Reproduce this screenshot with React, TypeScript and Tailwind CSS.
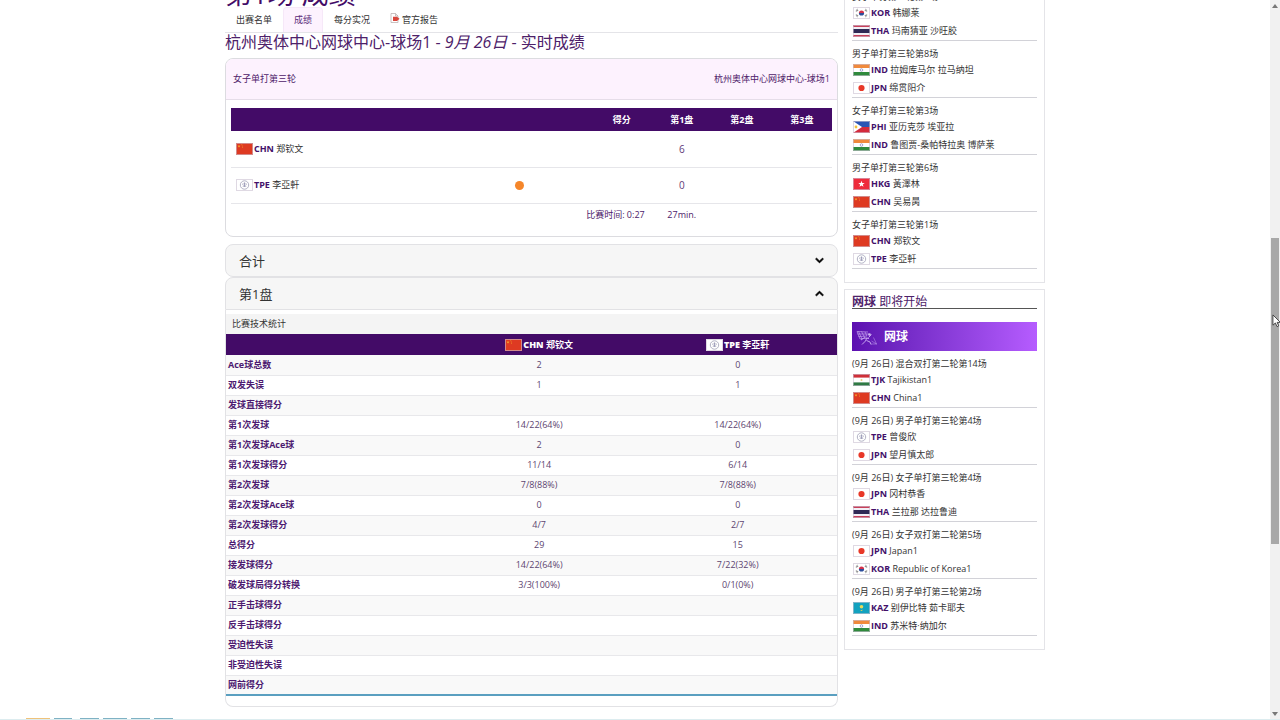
import { useState } from "react";
import type { ReactNode } from "react";
import { FaChevronDown, FaChevronUp } from "react-icons/fa";

interface Player {
  code: string;
  name: string;
}

interface Match {
  title: string;
  players: Player[];
}

const zheng: Player = { code: "CHN", name: "郑钦文" };
const li: Player = { code: "TPE", name: "李亞軒" };

const liveMatches: Match[] = [
  {
    title: "女子单打第三轮第7场",
    players: [
      { code: "KOR", name: "韩娜莱" },
      { code: "THA", name: "玛南猜亚 沙旺胶" },
    ],
  },
  {
    title: "男子单打第三轮第8场",
    players: [
      { code: "IND", name: "拉姆库马尔 拉马纳坦" },
      { code: "JPN", name: "绵贯阳介" },
    ],
  },
  {
    title: "女子单打第三轮第3场",
    players: [
      { code: "PHI", name: "亚历克莎 埃亚拉" },
      { code: "IND", name: "鲁图贾-桑帕特拉奥 博萨莱" },
    ],
  },
  {
    title: "男子单打第三轮第6场",
    players: [
      { code: "HKG", name: "黃澤林" },
      { code: "CHN", name: "吴易昺" },
    ],
  },
  { title: "女子单打第三轮第1场", players: [zheng, li] },
];

const upcomingMatches: Match[] = [
  {
    title: "(9月 26日) 混合双打第二轮第14场",
    players: [
      { code: "TJK", name: "Tajikistan1" },
      { code: "CHN", name: "China1" },
    ],
  },
  {
    title: "(9月 26日) 男子单打第三轮第4场",
    players: [
      { code: "TPE", name: "曾俊欣" },
      { code: "JPN", name: "望月慎太郎" },
    ],
  },
  {
    title: "(9月 26日) 女子单打第三轮第4场",
    players: [
      { code: "JPN", name: "冈村恭香" },
      { code: "THA", name: "兰拉那 达拉鲁迪" },
    ],
  },
  {
    title: "(9月 26日) 女子双打第二轮第5场",
    players: [
      { code: "JPN", name: "Japan1" },
      { code: "KOR", name: "Republic of Korea1" },
    ],
  },
  {
    title: "(9月 26日) 男子单打第三轮第2场",
    players: [
      { code: "KAZ", name: "别伊比特 茹卡耶夫" },
      { code: "IND", name: "苏米特·纳加尔" },
    ],
  },
];

const stats: [string, string, string][] = [
  ["Ace球总数", "2", "0"],
  ["双发失误", "1", "1"],
  ["发球直接得分", "", ""],
  ["第1次发球", "14/22(64%)", "14/22(64%)"],
  ["第1次发球Ace球", "2", "0"],
  ["第1次发球得分", "11/14", "6/14"],
  ["第2次发球", "7/8(88%)", "7/8(88%)"],
  ["第2次发球Ace球", "0", "0"],
  ["第2次发球得分", "4/7", "2/7"],
  ["总得分", "29", "15"],
  ["接发球得分", "14/22(64%)", "7/22(32%)"],
  ["破发球局得分转换", "3/3(100%)", "0/1(0%)"],
  ["正手击球得分", "", ""],
  ["反手击球得分", "", ""],
  ["受迫性失误", "", ""],
  ["非受迫性失误", "", ""],
  ["网前得分", "", ""],
];

const STAR = "M0 -1 L.24 -.31 L.95 -.31 L.38 .12 L.59 .81 L0 .4 L-.59 .81 L-.38 .12 L-.95 -.31 L-.24 -.31Z";

const flagArt: Record<string, ReactNode> = {
  CHN: (
    <>
      <rect width="17" height="12" fill="#de3a22" />
      <path d={STAR} transform="translate(3 3.2) scale(1.5)" fill="#f7b52c" />
      <circle cx="5.8" cy="1.7" r=".45" fill="#f7b52c" />
      <circle cx="6.6" cy="3" r=".45" fill="#f7b52c" />
      <circle cx="6.4" cy="4.6" r=".45" fill="#f7b52c" />
    </>
  ),
  TPE: (
    <>
      <rect width="17" height="12" fill="#fff" />
      <circle cx="8.5" cy="6" r="4.2" fill="none" stroke="#a9a9bd" strokeWidth=".9" />
      <path d={STAR} transform="translate(8.5 5.8) scale(2.6)" fill="none" stroke="#a9a9bd" strokeWidth=".2" />
      <path d="M8.5 4v4" stroke="#8f8fb0" strokeWidth=".8" />
    </>
  ),
  KOR: (
    <>
      <rect width="17" height="12" fill="#fff" />
      <path d="M5.9 6a2.6 2.6 0 0 1 5.2 0Z" fill="#d4304a" />
      <path d="M5.9 6a2.6 2.6 0 0 0 5.2 0Z" fill="#2b4d9b" />
      <path
        d="M2.8 3.8 4.6 2.2M3.6 4.6 5.2 3M14.2 3.8 12.4 2.2M13.4 4.6 11.8 3M2.8 8.2 4.6 9.8M3.6 7.4 5.2 9M14.2 8.2 12.4 9.8M13.4 7.4 11.8 9"
        stroke="#444"
        strokeWidth=".7"
      />
    </>
  ),
  THA: (
    <>
      <rect width="17" height="12" fill="#c8415a" />
      <rect y="2" width="17" height="8" fill="#f1eef5" />
      <rect y="4" width="17" height="4" fill="#2f2a55" />
    </>
  ),
  IND: (
    <>
      <rect width="17" height="12" fill="#fff" />
      <rect width="17" height="4" fill="#f08a3c" />
      <rect y="8" width="17" height="4" fill="#2f8a3c" />
      <circle cx="8.5" cy="6" r="1.3" fill="none" stroke="#6a6fb0" strokeWidth=".6" />
    </>
  ),
  JPN: (
    <>
      <rect width="17" height="12" fill="#fff" />
      <circle cx="8.5" cy="6" r="3.1" fill="#e83828" />
    </>
  ),
  PHI: (
    <>
      <rect width="17" height="6" fill="#2a55b5" />
      <rect y="6" width="17" height="6" fill="#d42a3c" />
      <path d="M0 0 9 6 0 12Z" fill="#fff" />
      <circle cx="3" cy="6" r="1.4" fill="#f2c23a" />
    </>
  ),
  HKG: (
    <>
      <rect width="17" height="12" fill="#ee2b3c" />
      <path d={STAR} transform="translate(8.5 6.1) scale(3.4)" fill="#fff" />
    </>
  ),
  TJK: (
    <>
      <rect width="17" height="12" fill="#fff" />
      <rect width="17" height="3.6" fill="#cf3038" />
      <rect y="8.4" width="17" height="3.6" fill="#2f7a44" />
      <circle cx="8.5" cy="6" r="1" fill="#eccf80" />
    </>
  ),
  KAZ: (
    <>
      <rect width="17" height="12" fill="#12a2bf" />
      <circle cx="8.5" cy="4.8" r="1.8" fill="#e8d95a" />
      <path d="M5 6.5Q8.500 9.500 12 6.500L8.500 8.900Z" fill="#e8d95a" />
    </>
  ),
};

function Flag({ code }: { code: string }) {
  return (
    <svg viewBox="0 0 17 12" role="img" aria-label={code} className="w-[17px] h-3 shrink-0">
      {flagArt[code]}
      <rect x=".5" y=".5" width="16" height="11" fill="none" stroke="#c9c0d0" strokeOpacity=".6" />
    </svg>
  );
}

function PlayerLabel({ player }: { player: Player }) {
  return (
    <span className="inline-flex items-center gap-px align-middle whitespace-nowrap">
      <Flag code={player.code} />
      <span>
        <b>{player.code}</b> <span className="player-name">{player.name}</span>
      </span>
    </span>
  );
}

function MatchList({ matches }: { matches: Match[] }) {
  return (
    <ul>
      {matches.map((match) => (
        <li key={match.title} className="pt-[5px] border-b border-[#d2d2d8]">
          <h3 className="leading-[15px] text-[#333]">{match.title}</h3>
          {match.players.map((p) => (
            <div key={p.code} className="flex items-center h-[18px] pl-px text-[#333] [&_b]:text-[#43106a]">
              <PlayerLabel player={p} />
            </div>
          ))}
        </li>
      ))}
    </ul>
  );
}

function Tabs() {
  const tab = "flex items-center h-[25px] px-[11px] text-[#333]";
  return (
    <nav className="flex border-b border-[#e4e4e8]">
      <a href="#entries" className={tab}>
        出赛名单
      </a>
      <a
        href="#results"
        aria-current="page"
        className="flex items-center h-[25px] px-[10px] rounded-t border border-b-0 border-[#f6e8f8] bg-[#fdf2fe] text-[#5b2a7a]"
      >
        成绩
      </a>
      <a href="#points" className={tab}>
        每分实况
      </a>
      <a href="#report" className="flex items-center h-[25px] px-[9px] gap-[2px] text-[#333]">
        <svg viewBox="0 0 10 10" className="w-[10px] h-[10px] -mt-1" aria-hidden="true">
          <path d="M1 .5h4.500L8 3v6.500H1Z" fill="#fff" stroke="#b5a9a9" strokeWidth=".7" />
          <path d="M5.500.5V3H8" fill="none" stroke="#b5a9a9" strokeWidth=".7" />
          <path d="M3 3.800h4L9.500 5.800 7 8H3Z" fill="#d9463c" />
        </svg>
        官方报告
      </a>
    </nav>
  );
}

function ScoreCard() {
  const rows = [
    { player: zheng, serving: false, set1: "6" },
    { player: li, serving: true, set1: "0" },
  ];
  return (
    <section className="mt-[7px] rounded-lg border border-[#dcdce0] overflow-hidden text-[#4d2169]">
      <header className="flex items-center justify-between h-[41px] px-[7px] bg-[#fdf2fe] border-b border-[#e6dde9]">
        <span>女子单打第三轮</span>
        <span>杭州奥体中心网球中心-球场1</span>
      </header>
      <div className="px-[5px] pt-2 pb-[10px]">
        <table className="w-full table-fixed text-center text-[#4d2169]">
          <colgroup>
            <col className="w-[36%]" />
            <col className="w-[24%]" />
            <col className="w-[10%]" />
            <col className="w-[10%]" />
            <col className="w-[10%]" />
            <col className="w-[10%]" />
          </colgroup>
          <thead>
            <tr className="h-[23px] bg-[#430b67] text-white">
              <th />
              <th />
              <th>得分</th>
              <th>第1盘</th>
              <th>第2盘</th>
              <th>第3盘</th>
            </tr>
          </thead>
          <tbody>
            {rows.map((row) => (
              <tr key={row.player.code} className="h-9 border-b border-[#e6e6ea]">
                <td className="pl-[5px] text-left [&_b]:text-[#43106a] [&_.player-name]:text-[#333]">
                  <PlayerLabel player={row.player} />
                </td>
                <td>
                  {row.serving && <span className="block mx-auto w-[9px] h-[9px] rounded-full bg-[#f5862a]" />}
                </td>
                <td />
                <td className="text-[10px] text-[#5f3a78]">{row.set1}</td>
                <td />
                <td />
              </tr>
            ))}
            <tr className="h-[23px]">
              <td />
              <td colSpan={2} className="pr-[7px] text-right">
                比赛时间: 0:27
              </td>
              <td>27min.</td>
              <td />
              <td />
            </tr>
          </tbody>
        </table>
      </div>
    </section>
  );
}

function AccordionHeader({ title, open, onClick }: { title: string; open: boolean; onClick: () => void }) {
  const Chevron = open ? FaChevronUp : FaChevronDown;
  return (
    <button
      type="button"
      aria-expanded={open}
      onClick={onClick}
      className={`flex items-center justify-between w-full h-[33px] px-[13px] border border-[#e2e2e5] bg-[#f6f6f6] text-[13px] text-[#333] ${
        open ? "rounded-t-lg" : "rounded-lg"
      }`}
    >
      {title}
      <Chevron className="w-[9px] h-[9px] text-black stroke-black stroke-[40]" />
    </button>
  );
}

function StatsTable() {
  return (
    <div className="pt-1 pb-[10px] rounded-b-lg border border-t-0 border-[#e2e2e5]">
      <h3 className="h-5 leading-[20px] px-[6px] bg-[#f4f4f4] text-[#333]">比赛技术统计</h3>
      <table className="w-full table-fixed text-center text-[#5d4570] border-b-2 border-[#5a9fc0]">
        <colgroup>
          <col className="w-[35%]" />
          <col />
          <col />
        </colgroup>
        <thead>
          <tr className="h-[21px] bg-[#430b67] text-white">
            <th />
            <th>
              <PlayerLabel player={zheng} />
            </th>
            <th>
              <PlayerLabel player={li} />
            </th>
          </tr>
        </thead>
        <tbody>
          {stats.map(([label, a, b]) => (
            <tr key={label} className="h-5 border-b border-[#e8e8eb] last:border-b-0 odd:bg-[#f9f9f9]">
              <th scope="row" className="pl-[2px] text-left text-[#4d1a70]">
                {label}
              </th>
              <td>{a}</td>
              <td>{b}</td>
            </tr>
          ))}
        </tbody>
      </table>
    </div>
  );
}

function TennisIcon() {
  return (
    <svg viewBox="0 0 22 18" className="w-[22px] h-[18px]" fill="none" stroke="#c3a0ee" aria-hidden="true">
      <path d="M1 3.500 12 4M1.500 6 13 6M2.500 8.500 11 8M4 11 9 10M2.500 3.500 6 11M5.500 3.500 9 10M9 4 11 8M1 3.500 4 11" strokeWidth=".7" />
      <circle cx="13.500" cy="6.500" r="1.300" fill="#d3b8f5" stroke="none" />
      <path d="M5 12 8 10l5 .5M11 9.500 9.500 13 6 16.500M10.500 12.500l3.500 1.500 1 2.500M12.500 9.500l3-3" strokeWidth="1" />
      <path d="M17.500 9.500 20.500 16M15.500 13l5 3M15 16h6" strokeWidth=".5" />
    </svg>
  );
}

function Scrollbar() {
  return (
    <div className="flex flex-col items-center w-[10px] shrink-0 py-1 bg-[#f1f1f1]" aria-hidden="true">
      <svg viewBox="0 0 6 4" className="w-[6px] h-1 shrink-0">
        <path d="M0 4 3 0 6 4Z" fill="#777" />
      </svg>
      <div className="grow-[230] basis-0" />
      <div className="grow-[306] basis-0 w-2 bg-[#a8a8a8]" />
      <div className="grow-[168] basis-0" />
      <svg viewBox="0 0 6 4" className="w-[6px] h-1 shrink-0">
        <path d="M0 0h6L3 4Z" fill="#777" />
      </svg>
    </div>
  );
}

export default function App() {
  const [openTotal, setOpenTotal] = useState(false);
  const [openSet, setOpenSet] = useState(true);

  return (
    <div className="relative flex h-screen overflow-hidden bg-white text-[9px] leading-[12px] font-['Open_Sans','Noto_Sans_CJK_SC',sans-serif]">
      <div className="flex-1 min-w-0">
        {/* Page is scrolled, so the heading is partly cut off */}
        <div className="flex items-start gap-[6px] w-full max-w-[820px] mx-auto -mt-[19px]">
          <main className="flex-1 min-w-0">
            <h1 className="text-[27px] leading-[26px] whitespace-nowrap text-[#430b67]">第1场 成绩</h1>
            <Tabs />
            <h2 className="text-[16px] leading-[18px] whitespace-nowrap text-[#4d2169]">
              杭州奥体中心网球中心-球场1 - <em>9月 26日</em> - 实时成绩
            </h2>
            <ScoreCard />
            <div className="mt-[7px]">
              <AccordionHeader title="合计" open={openTotal} onClick={() => setOpenTotal(!openTotal)} />
              <AccordionHeader title="第1盘" open={openSet} onClick={() => setOpenSet(!openSet)} />
              {openSet && <StatsTable />}
            </div>
          </main>

          <aside className="w-[201px] shrink-0">
            <section className="px-[7px] pt-[2px] pb-[13px] border border-[#e4e4e8]">
              <MatchList matches={liveMatches} />
            </section>
            <section className="mt-[6px] px-[7px] pt-[5px] pb-[13px] border border-[#e4e4e8]">
              <h2 className="text-[12px] leading-[13px] border-b border-[#555] text-[#4d2169]">
                <b>网球</b> 即将开始
              </h2>
              <div className="flex items-center gap-[6px] h-[29px] mt-[13px] pl-1 bg-linear-to-r from-[#5c0fb0] to-[#b65cff] text-[12px] font-bold text-white">
                <TennisIcon />
                网球
              </div>
              <MatchList matches={upcomingMatches} />
            </section>
          </aside>
        </div>
      </div>

      <Scrollbar />

      {/* Mouse pointer over the scrollbar */}
      <svg viewBox="0 0 10 15" className="absolute right-0 top-[314px] w-[8px] h-[14px]" preserveAspectRatio="xMinYMin slice" aria-hidden="true">
        <path d="M1 1v11l2.600-2.400L5.400 13.500l1.800-.8L5.500 9H9Z" fill="#fff" stroke="#333" strokeWidth=".9" />
      </svg>

      {/* Top edge of the dock */}
      <div className="absolute inset-x-0 bottom-0 flex items-end gap-1 h-[2px] pl-[26px] border-b border-[#dcecef]" aria-hidden="true">
        <i className="w-6 h-px bg-[#efc27a]" />
        <i className="w-[18px] h-px mr-1 bg-[#7fb2c4]" />
        <i className="w-[19px] h-px bg-[#7fb2c4]" />
        <i className="w-6 h-px bg-[#7fb2c4]" />
        <i className="w-[19px] h-px bg-[#7fb2c4]" />
        <i className="w-[19px] h-px bg-[#7fb2c4]" />
      </div>
    </div>
  );
}
